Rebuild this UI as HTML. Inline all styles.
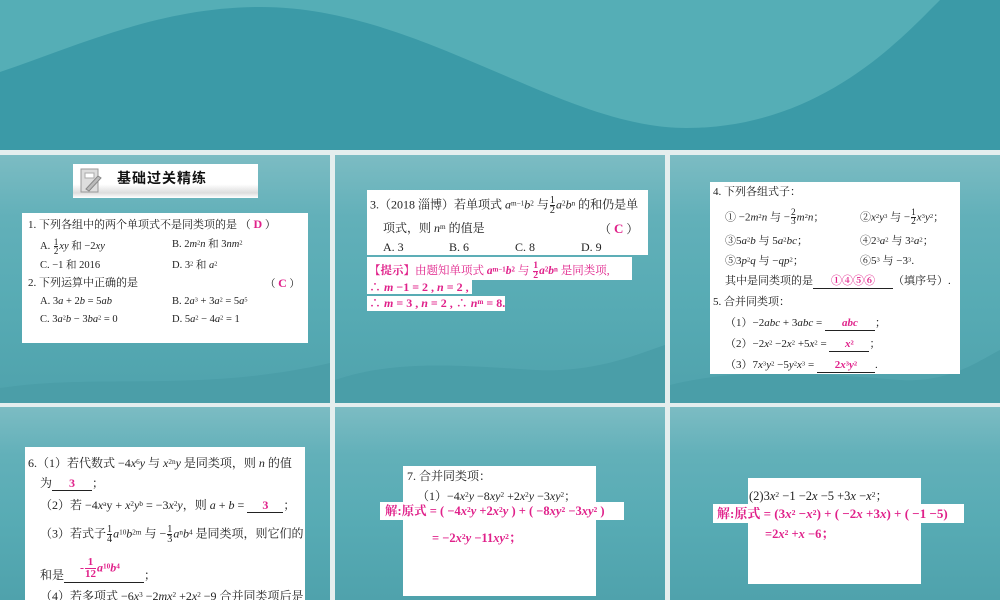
<!DOCTYPE html>
<html><head><meta charset="utf-8"><style>
*{margin:0;padding:0;box-sizing:border-box}
body{width:1000px;height:600px;position:relative;overflow:hidden;background:#e4eeee;font-family:"Liberation Serif","Noto Serif CJK SC",serif;font-size:10.5px;color:#222}
.p{position:absolute;overflow:hidden;background:linear-gradient(180deg,#7cbcc3 0%,#62b0b9 25%,#57abb4 60%,#4fa2ac 100%)}
.b{position:absolute;background:#fff}
.t{position:absolute;white-space:nowrap;line-height:13px}
.k{color:#e0218a;font-weight:bold}
.i{font-style:italic}
sup{font-size:0.6em;vertical-align:0.4em;line-height:0}
.fr{display:inline-block;vertical-align:middle;text-align:center;font-size:0.85em;line-height:0.9em;margin:0 1px}
.fr span{display:block;border-bottom:1px solid currentColor}
.u{display:inline-block;border-bottom:1px solid #222;text-align:center}
</style></head><body>
<svg style="position:absolute;left:0;top:0" width="1000" height="150">
<rect width="1000" height="150" fill="#3b9aa7"/>
<path d="M0 0 H940 C900 40 820 128 686 128 C560 128 420 7 261 7 C160 7 80 45 0 72 Z" fill="#55aeb6"/>
</svg>

<!-- Panel 1 -->
<div class="p" style="left:0;top:155px;width:330px;height:248px">
<svg width="330" height="60" style="position:absolute;left:0;top:188px"><path d="M0 60 V45 C100 30 200 50 330 20 V60Z" fill="#4b9ea8"/></svg>
<div class="b" style="left:73px;top:9px;width:185px;height:34px;background:linear-gradient(180deg,#fff 60%,#ddd 85%,#fff 100%)"></div>
<svg style="position:absolute;left:78px;top:12px" width="26" height="28"><rect x="3" y="2" width="17" height="23" fill="#ddd" stroke="#999"/><rect x="7" y="6" width="9" height="5" fill="#fff" stroke="#aaa"/><path d="M8 22 L20 9 L23 11 L11 24 Z" fill="#bbb" stroke="#888"/></svg>
<div class="t" style="left:117px;top:17px;font-size:14px;font-weight:bold;font-family:'Liberation Sans','Noto Sans CJK SC',sans-serif;color:#111;letter-spacing:1px">基础过关精练</div>
<div class="b" style="left:22px;top:58px;width:286px;height:130px"></div>
<div class="t" style="left:28px;top:63px;font-size:11px">1. 下列各组中的两个单项式不是同类项的是 （ <span class="k" style="font-size:12px">D</span> ）</div>
<div class="t" style="left:40px;top:83px">A. <span class="fr"><span>1</span>2</span><i>xy</i> 和 −2<i>xy</i></div>
<div class="t" style="left:172px;top:83px">B. 2<i>m</i><sup>2</sup><i>n</i> 和 3<i>nm</i><sup>2</sup></div>
<div class="t" style="left:40px;top:104px">C. −1 和 2016</div>
<div class="t" style="left:172px;top:104px">D. 3<sup>2</sup> 和 <i>a</i><sup>2</sup></div>
<div class="t" style="left:28px;top:122px;font-size:11px">2. 下列运算中正确的是</div>
<div class="t" style="left:265px;top:122px">（ <span class="k" style="font-size:12px">C</span> ）</div>
<div class="t" style="left:40px;top:140px">A. 3<i>a</i> + 2<i>b</i> = 5<i>ab</i></div>
<div class="t" style="left:172px;top:140px">B. 2<i>a</i><sup>3</sup> + 3<i>a</i><sup>2</sup> = 5<i>a</i><sup>5</sup></div>
<div class="t" style="left:40px;top:158px">C. 3<i>a</i><sup>2</sup><i>b</i> − 3<i>ba</i><sup>2</sup> = 0</div>
<div class="t" style="left:172px;top:158px">D. 5<i>a</i><sup>2</sup> − 4<i>a</i><sup>2</sup> = 1</div>
</div>

<!-- Panel 2 -->
<div class="p" style="left:335px;top:155px;width:330px;height:248px;font-size:12px">
<svg style="position:absolute;left:0;top:170px" width="330" height="78"><path d="M0 78 V55 C60 35 120 40 200 45 C260 48 300 30 330 20 V78Z" fill="#4a9ea8"/></svg>
<div class="b" style="left:32px;top:35px;width:281px;height:65px"></div>
<div class="t" style="left:35px;top:41px">3.（2018 淄博）若单项式 <i>a</i><sup>m−1</sup><i>b</i><sup>2</sup> 与<span class="fr"><span>1</span>2</span><i>a</i><sup>2</sup><i>b</i><sup>n</sup> 的和仍是单</div>
<div class="t" style="left:48px;top:67px">项式，则 <i>n</i><sup>m</sup> 的值是</div>
<div class="t" style="left:264px;top:67px">（ <span class="k" style="font-size:13px">C</span> ）</div>
<div class="t" style="left:48px;top:86px">A. 3</div><div class="t" style="left:114px;top:86px">B. 6</div><div class="t" style="left:180px;top:86px">C. 8</div><div class="t" style="left:246px;top:86px">D. 9</div>
<div class="b" style="left:32px;top:102px;width:265px;height:23px"></div>
<div class="t k" style="left:34px;top:107px;font-weight:normal;font-size:11.5px">【<b>提示</b>】由题知单项式 <b><i>a</i><sup>m−1</sup><i>b</i><sup>2</sup></b> 与 <b class="fr"><span>1</span>2</b><b><i>a</i><sup>2</sup><i>b</i><sup>n</sup></b> 是同类项,</div>
<div class="b" style="left:32px;top:125px;width:105px;height:14px"></div>
<div class="t k" style="left:34px;top:126px">∴ <i>m</i> −1 = 2 , <i>n</i> = 2 ,</div>
<div class="b" style="left:32px;top:141px;width:138px;height:15px"></div>
<div class="t k" style="left:34px;top:142px">∴ <i>m</i> = 3 , <i>n</i> = 2 , ∴ <i>n</i><sup>m</sup> = 8.</div>
</div>

<!-- Panel 3 -->
<div class="p" style="left:670px;top:155px;width:330px;height:248px;font-size:11px">
<svg style="position:absolute;left:0;top:170px" width="330" height="78"><path d="M0 78 V60 C80 40 160 50 230 55 C280 58 310 35 330 25 V78Z" fill="#4a9ea8"/></svg>
<div class="b" style="left:40px;top:27px;width:250px;height:192px"></div>
<div class="t" style="left:43px;top:31px">4. 下列各组式子：</div>
<div class="t" style="left:55px;top:54px">① −2<i>m</i><sup>2</sup><i>n</i> 与 −<span class="fr"><span>2</span>3</span><i>m</i><sup>2</sup><i>n</i>；</div>
<div class="t" style="left:190px;top:54px">②<i>x</i><sup>2</sup><i>y</i><sup>3</sup> 与 −<span class="fr"><span>1</span>2</span><i>x</i><sup>3</sup><i>y</i><sup>2</sup>；</div>
<div class="t" style="left:55px;top:80px">③5<i>a</i><sup>2</sup><i>b</i> 与 5<i>a</i><sup>2</sup><i>bc</i>；</div>
<div class="t" style="left:190px;top:80px">④2<sup>3</sup><i>a</i><sup>2</sup> 与 3<sup>2</sup><i>a</i><sup>2</sup>；</div>
<div class="t" style="left:55px;top:100px">⑤3<i>p</i><sup>2</sup><i>q</i> 与 −<i>qp</i><sup>2</sup>；</div>
<div class="t" style="left:190px;top:100px">⑥5<sup>3</sup> 与 −3<sup>3</sup>.</div>
<div class="t" style="left:55px;top:120px">其中是同类项的是<span class="u" style="width:80px"><span class="k">①④⑤⑥</span></span>（填序号）.</div>
<div class="t" style="left:43px;top:141px">5. 合并同类项：</div>
<div class="t" style="left:55px;top:162px">（1）−2<i>abc</i> + 3<i>abc</i> = <span class="u" style="width:50px"><span class="k i">abc</span></span>；</div>
<div class="t" style="left:55px;top:183px">（2）−2<i>x</i><sup>2</sup> −2<i>x</i><sup>2</sup> +5<i>x</i><sup>2</sup> = <span class="u" style="width:40px"><span class="k"><i>x</i><sup>2</sup></span></span>；</div>
<div class="t" style="left:55px;top:204px">（3）7<i>x</i><sup>3</sup><i>y</i><sup>2</sup> −5<i>y</i><sup>2</sup><i>x</i><sup>3</sup> = <span class="u" style="width:58px"><span class="k">2<i>x</i><sup>3</sup><i>y</i><sup>2</sup></span></span>.</div>
</div>

<!-- Panel 4 -->
<div class="p" style="left:0;top:407px;width:330px;height:193px;font-size:12px">
<div class="b" style="left:25px;top:40px;width:280px;height:160px"></div>
<div class="t" style="left:28px;top:50px">6.（1）若代数式 −4<i>x</i><sup>6</sup><i>y</i> 与 <i>x</i><sup>2n</sup><i>y</i> 是同类项，则 <i>n</i> 的值</div>
<div class="t" style="left:40px;top:70px">为<span class="u" style="width:40px"><span class="k">3</span></span>；</div>
<div class="t" style="left:40px;top:92px">（2）若 −4<i>x</i><sup>a</sup>y + <i>x</i><sup>2</sup><i>y</i><sup>b</sup> = −3<i>x</i><sup>2</sup><i>y</i>，则 <i>a</i> + <i>b</i> = <span class="u" style="width:36px"><span class="k">3</span></span>；</div>
<div class="t" style="left:40px;top:118px">（3）若式子<span class="fr"><span>1</span>4</span><i>a</i><sup>10</sup><i>b</i><sup>2m</sup> 与 −<span class="fr"><span>1</span>3</span><i>a</i><sup>n</sup><i>b</i><sup>4</sup> 是同类项，则它们的</div>
<div class="t k" style="left:80px;top:150px">-<span class="fr" style="font-size:11px;line-height:11px"><span>1</span>12</span><i>a</i><sup>10</sup><i>b</i><sup>4</sup></div>
<div class="t" style="left:40px;top:162px">和是<span class="u" style="width:80px">&nbsp;</span>；</div>
<div class="t" style="left:40px;top:183px">（4）若多项式 −6<i>x</i><sup>3</sup> −2<i>mx</i><sup>2</sup> +2<i>x</i><sup>2</sup> −9 合并同类项后是</div>
</div>

<!-- Panel 5 -->
<div class="p" style="left:335px;top:407px;width:330px;height:193px;font-size:12px">
<div class="b" style="left:68px;top:59px;width:193px;height:130px"></div>
<div class="t" style="left:72px;top:63px">7. 合并同类项：</div>
<div class="t" style="left:82px;top:83px">（1）−4<i>x</i><sup>2</sup><i>y</i> −8<i>xy</i><sup>2</sup> +2<i>x</i><sup>2</sup><i>y</i> −3<i>xy</i><sup>2</sup>；</div>
<div class="b" style="left:45px;top:95px;width:244px;height:18px"></div>
<div class="t k" style="left:50px;top:98px;font-size:12.5px">解:原式 = ( −4<i>x</i><sup>2</sup><i>y</i> +2<i>x</i><sup>2</sup><i>y</i> ) + ( −8<i>xy</i><sup>2</sup> −3<i>xy</i><sup>2</sup> )</div>
<div class="t k" style="left:97px;top:125px;font-size:12.5px">= −2<i>x</i><sup>2</sup><i>y</i> −11<i>xy</i><sup>2</sup>；</div>
</div>

<!-- Panel 6 -->
<div class="p" style="left:670px;top:407px;width:330px;height:193px;font-size:12.5px">
<div class="b" style="left:78px;top:71px;width:173px;height:106px"></div>
<div class="t" style="left:79px;top:83px">(2)3<i>x</i><sup>2</sup> −1 −2<i>x</i> −5 +3<i>x</i> −<i>x</i><sup>2</sup>；</div>
<div class="b" style="left:43px;top:97px;width:251px;height:19px"></div>
<div class="t k" style="left:47px;top:100px;font-size:13px">解:原式 = (3<i>x</i><sup>2</sup> −<i>x</i><sup>2</sup>) + ( −2<i>x</i> +3<i>x</i>) + ( −1 −5)</div>
<div class="t k" style="left:95px;top:121px">=2<i>x</i><sup>2</sup> +<i>x</i> −6；</div>
</div>
</body></html>
